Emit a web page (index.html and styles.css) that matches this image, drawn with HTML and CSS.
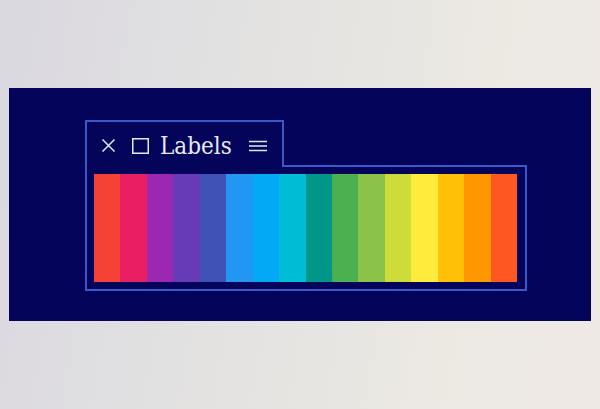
FILE: index.html
```html
<!DOCTYPE html>
<html>
<head>
<meta charset="utf-8">
<link rel="stylesheet" href="styles.css">
</head>
<body>
<div class="band">
  <div class="window">
    <div class="header">
      <div class="tab">
        <svg class="icon-close" width="13" height="13" viewBox="0 0 13 13"><path d="M0.5 0.5 L12.5 12.5 M12.5 0.5 L0.5 12.5" stroke="#e6e8f4" stroke-width="1.5" fill="none"/></svg>
        <svg class="icon-square" width="17" height="16" viewBox="0 0 17 16"><rect x="0.75" y="0.75" width="15.5" height="14.5" stroke="#e6e8f4" stroke-width="1.5" fill="none"/></svg>
        <span class="title">Labels</span>
        <svg class="icon-menu" width="18" height="12" viewBox="0 0 18 12"><path d="M0 1.5 H18 M0 6 H18 M0 10.5 H18" stroke="#e6e8f4" stroke-width="1.5" fill="none"/></svg>
      </div>
      <div class="spacer"></div>
    </div>
    <div class="body">
      <div class="strip">
        <div class="sw" style="background:#F44336"></div>
        <div class="sw" style="background:#E91E63"></div>
        <div class="sw" style="background:#9C27B0"></div>
        <div class="sw" style="background:#673AB7"></div>
        <div class="sw" style="background:#3F51B5"></div>
        <div class="sw" style="background:#2196F3"></div>
        <div class="sw" style="background:#03A9F4"></div>
        <div class="sw" style="background:#00BCD4"></div>
        <div class="sw" style="background:#009688"></div>
        <div class="sw" style="background:#4CAF50"></div>
        <div class="sw" style="background:#8BC34A"></div>
        <div class="sw" style="background:#CDDC39"></div>
        <div class="sw" style="background:#FFEB3B"></div>
        <div class="sw" style="background:#FFC107"></div>
        <div class="sw" style="background:#FF9800"></div>
        <div class="sw" style="background:#FF5722"></div>
      </div>
    </div>
  </div>
</div>
</body>
</html>
```
FILE: styles.css
```css
html, body {
  margin: 0;
  padding: 0;
}
body {
  width: 600px;
  height: 409px;
  overflow: hidden;
  background: linear-gradient(100deg, #dad8e0 0%, #e3e2e1 40%, #ece9e3 75%, #efe9e5 100%);
  padding-top: 88px;
  box-sizing: border-box;
}
.band {
  margin: 0 9px;
  height: 233px;
  background: #03045a;
  padding-top: 32px;
  padding-left: 76px;
  box-sizing: border-box;
}
.window {
  width: 442px;
}
.header {
  display: flex;
  align-items: flex-end;
}
.tab {
  width: 199px;
  height: 47px;
  box-sizing: border-box;
  border: 2px solid #3a58c6;
  border-bottom: none;
  display: flex;
  align-items: center;
  padding-left: 15px;
  padding-top: 2px;
}
.icon-close {
  display: block;
  flex: none;
}
.icon-square {
  display: block;
  flex: none;
  margin-left: 17px;
}
.title {
  margin-left: 11px;
  font-family: "DejaVu Serif Condensed", "DejaVu Serif", serif;
  font-stretch: semi-condensed;
  font-size: 24px;
  color: #e8e9f3;
  line-height: 1;
  width: 73px;
  white-space: nowrap;
}
.icon-menu {
  display: block;
  flex: none;
  margin-left: 16px;
}
.spacer {
  flex: 1;
  height: 2px;
  box-sizing: border-box;
  border-top: 2px solid #3a58c6;
  border-right: 2px solid #3a58c6;
}
.body {
  border: 2px solid #3a58c6;
  border-top: none;
  padding: 7px 8px 7px 7px;
}
.strip {
  display: flex;
  height: 108px;
}
.sw {
  flex: 1;
}
```
